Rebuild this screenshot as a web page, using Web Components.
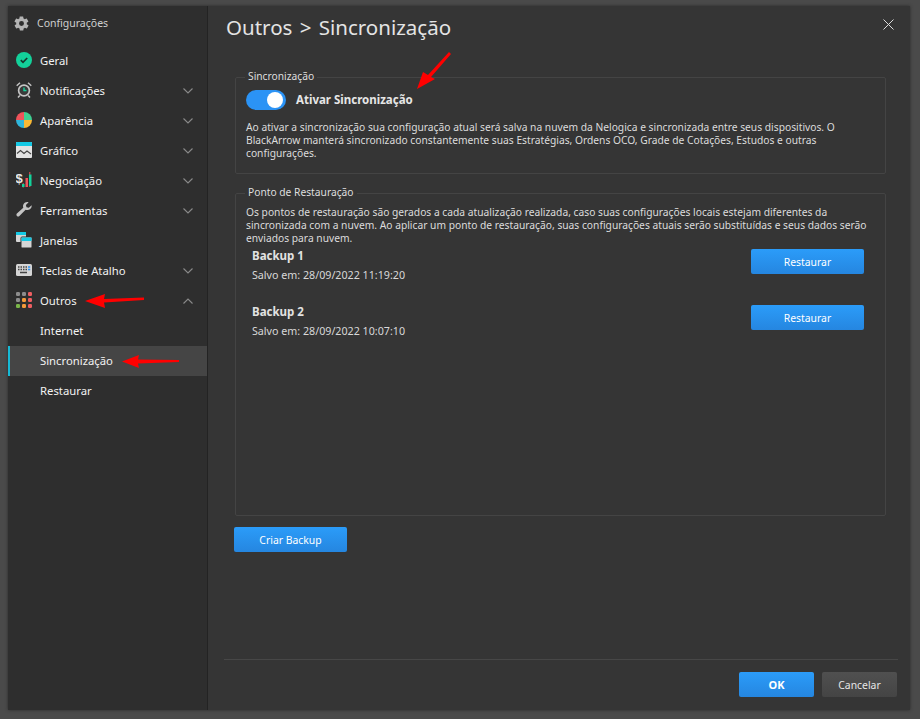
<!DOCTYPE html>
<html lang="pt"><head><meta charset="utf-8"><title>Configurações</title>
<style>
html,body{margin:0;height:100%;background:#4a4a4a;overflow:hidden}
body{font-family:"Noto Sans","Open Sans",sans-serif;font-size:12px;color:#e6e6e6}
</style></head><body>
<template id="t-dialog"><style>
:host{display:block;position:relative;box-sizing:border-box;width:902px;height:704px;margin:6px 0 0 8px;background:#353535;box-shadow:0 0 3px #2a2a2a}
.w{display:flex;height:100%}
</style><div class="w"><slot name="side"></slot><slot name="main"></slot></div><slot name="over"></slot></template>

<template id="t-side"><style>
:host{display:block;box-sizing:border-box;width:200px;height:100%;background:#2e2e2e;border-right:1px solid #232323}
.h{display:flex;align-items:center;gap:7px;height:34px;padding-left:5px;margin-bottom:6px;font-size:10.5px;color:#cfcfcf}
</style><div class="h"><svg width="17" height="17" viewBox="0 0 24 24"><path fill="#b4b4b4" d="M19.4 13c.1-.3.1-.7.1-1s0-.7-.1-1l2.100-1.600c.2-.2.2-.4.1-.6l-2-3.500c-.1-.2-.4-.3-.6-.2l-2.500 1c-.5-.4-1.100-.7-1.700-1l-.4-2.600c0-.2-.2-.4-.5-.4h-4c-.3 0-.5.2-.5.4l-.4 2.600c-.6.3-1.200.6-1.700 1l-2.500-1c-.2-.1-.5 0-.6.2l-2 3.500c-.1.2-.1.4.1.6L4.600 11c-.1.3-.1.7-.1 1s0 .7.100 1l-2.100 1.600c-.2.2-.2.4-.1.600l2 3.500c.1.2.4.3.6.2l2.500-1c.5.4 1.100.7 1.700 1l.4 2.600c0 .2.2.4.5.4h4c.3 0 .5-.2.5-.4l.4-2.600c.6-.3 1.200-.6 1.700-1l2.500 1c.2.1.5 0 .6-.2l2-3.500c.1-.2.1-.4-.1-.6zM12 15.500a3.500 3.500 0 1 1 0-7 3.500 3.500 0 0 1 0 7z"/></svg><span>Configurações</span></div><slot></slot></template>

<template id="t-item"><style>
:host{display:flex;align-items:center;box-sizing:border-box;height:30px;padding:0 0 2px 8px;color:#f2f2f2;font-size:11.3px;font-weight:400}
:host([sub]){padding-left:32px}
:host([active]){background:#454545;box-shadow:inset 2px 0 0 #16b9d6;}
.i{display:flex;width:16px;height:16px;margin-right:8px;flex:none}
:host([sub]) .i{display:none}
.t{flex:1}
.c{width:10px;height:6px;margin:2px 14px 0 0;flex:none}
</style><span class="i"><slot name="icon"></slot></span><span class="t"><slot></slot></span><svg class="c" viewBox="0 0 10 6"><path id="p" fill="none" stroke="#8a8a8a" stroke-width="1.100" d=""/></svg></template>

<template id="t-field"><style>
:host{display:block}
fieldset{margin:0;padding:0 10px;border:1px solid #444;border-radius:2px;height:100%;box-sizing:border-box;min-width:0}
legend{padding:0 3px 2px;margin-left:-1px;font-size:10.25px;color:#dedede;line-height:12px}
</style><fieldset><legend id="l"></legend><slot></slot></fieldset></template>

<template id="t-btn"><style>
:host{display:inline-flex;align-items:center;justify-content:center;height:25px;border-radius:2px;background:linear-gradient(#2b9cf9,#2586e0);color:#fff;font-size:10.4px}
:host([kind=ok]){font-weight:700;font-size:11px}
:host([kind=gray]){background:linear-gradient(#505050,#444);color:#e6e6e6}
</style><slot></slot></template>

<template id="t-switch"><style>
:host{display:block;width:40px;height:20px;border-radius:10px;background:#2b93f5;position:relative;flex:none}
b{position:absolute;right:3px;top:2px;width:16px;height:16px;border-radius:50%;background:#fff}
</style><b></b></template>

<template id="t-backup"><style>
:host{display:flex;justify-content:space-between;height:56px;padding:0 11px 0 6px}
h4{margin:0;font-size:11.500px;line-height:14px;font-weight:700;color:#e2e2e2}
p{margin:5px 0 0;font-size:10.700px;line-height:14px;color:#d8d8d8}
</style><div><h4><slot name="name"></slot></h4><p><slot name="date"></slot></p></div><div><slot name="action"></slot></div></template>

<template id="t-main"><style>
:host{display:flex;flex-direction:column;flex:1;min-width:0;padding:0 12px 0 16px;position:relative}
h1{margin:0;height:64px;padding:0 0 0 2px;font-size:20.500px;font-weight:400;line-height:43px;color:#e4e4e4;white-space:pre;word-spacing:2px}
.x{position:absolute;right:16px;top:13px;width:11px;height:11px}
.body{flex:1;padding:0 0 0 11px;margin-right:12px}
.foot{box-sizing:border-box;height:51px;border-top:1px solid #474747;display:flex;justify-content:flex-end;gap:8px;padding:12px 1px 0 0}
</style><h1>Outros &gt; Sincronização</h1><svg class="x" viewBox="0 0 11 11"><path d="M.5.5l10 10M10.500.5l-10 10" stroke="#dcdcdc" fill="none"/></svg><div class="body"><slot></slot></div><div class="foot"><slot name="foot"></slot></div></template>

<a-dialog>
<a-side slot="side">
<a-item><svg slot="icon" width="16" height="16" viewBox="0 0 16 16"><circle cx="8" cy="8" r="8" fill="#13d19a"/><path d="M4.800 8.200l2.200 2.100 4.200-4.300" fill="none" stroke="#17362c" stroke-width="1.700"/></svg>Geral</a-item>
<a-item chev="down"><svg slot="icon" width="16" height="16" viewBox="0 0 16 16"><circle cx="8" cy="8.500" r="5.400" fill="#3a3a3a" stroke="#c4c4c4" stroke-width="1.700"/><path d="M8 5.500v3h2.500" stroke="#13d19a" stroke-width="1.400" fill="none"/><path d="M.7 3.700L4 .8M15.300 3.700L12 .8M3.800 13.500l-1.800 2M12.200 13.500l1.800 2" stroke="#c4c4c4" stroke-width="1.500"/></svg>Notificações</a-item>
<a-item chev="down"><svg slot="icon" width="16" height="16" viewBox="0 0 16 16"><path d="M8 8V0A8 8 0 0 0 0 8z" fill="#f0535a"/><path d="M8 8V0a8 8 0 0 1 8 8z" fill="#3fcf91"/><path d="M8 8H0a8 8 0 0 0 8 8z" fill="#2fb6dc"/><path d="M8 8h8a8 8 0 0 1-8 8z" fill="#f9b935"/></svg>Aparência</a-item>
<a-item chev="down"><svg slot="icon" width="16" height="16" viewBox="0 0 16 16"><rect width="16" height="16" rx="1" fill="#e2e2e2"/><path d="M0 1a1 1 0 0 1 1-1h14a1 1 0 0 1 1 1v3H0z" fill="#14c8e4"/><path d="M1 11.500l3.500-3 3.500 3 3-2.500 4 3" fill="none" stroke="#444" stroke-width="1.100"/></svg>Gráfico</a-item>
<a-item chev="down"><svg slot="icon" width="16" height="16" viewBox="0 0 16 16"><text x="-.5" y="10.500" font-family="Liberation Sans" font-size="13" font-weight="700" fill="#e8e8e8">$</text><path d="M7.200 11v4.500M13.800 0v15" stroke-width="1" stroke="#f0535a"/><rect x="6" y="12" width="2.500" height="3" fill="#13d19a"/><rect x="9.500" y="6" width="2.500" height="9" fill="#f0535a"/><rect x="13" y="2.500" width="2.500" height="11.500" fill="#13d19a"/></svg>Negociação</a-item>
<a-item chev="down"><svg slot="icon" width="16" height="16" viewBox="0 0 16 16"><path d="M15.600 3.200l-2.800 2.500-2.300-.5-.6-2.300L12.600.2C10.200-.4 7.800.8 7.200 3c-.3 1-.2 1.900.1 2.700L.9 11.600c-1.500 1.500.9 4.100 2.500 2.500l6.200-6.300c3 .9 6.600-1.300 6-4.600z" fill="#c4c4c4"/></svg>Ferramentas</a-item>
<a-item><svg slot="icon" width="16" height="16" viewBox="0 0 16 16"><rect x="0" y="0" width="10" height="10" rx="1" fill="#d5d5d5"/><rect x="0" y="0" width="10" height="3" fill="#14c8e4"/><rect x="5" y="5" width="11" height="11" rx="1" fill="#d5d5d5" stroke="#2e2e2e"/><rect x="5.500" y="5.500" width="10" height="3.500" fill="#14c8e4"/></svg>Janelas</a-item>
<a-item chev="down"><svg slot="icon" width="16" height="16" viewBox="0 0 16 16"><rect y="2" width="16" height="12" rx="1.500" fill="#d5d5d5"/><path d="M2 5h1.500M4.500 5H6M7 5h1.500M9.500 5H11M2 7.500h1.500M4.500 7.500H6M7 7.500h1.500M9.500 7.500H11M4 10.500h7" stroke="#444" stroke-width="1.300"/><path d="M12 5h2.200M12 7.500h2.200" stroke="#2b93f5" stroke-width="1.300"/></svg>Teclas de Atalho</a-item>
<a-item chev="up"><svg slot="icon" width="16" height="16" viewBox="0 0 16 16"><g fill="#8d8d8d"><rect width="4" height="4" rx="1.200"/><rect x="6" width="4" height="4" rx="1.200"/><rect y="6" width="4" height="4" rx="1.200"/></g><g fill="#ef5f62"><rect x="12" width="4" height="4" rx="1.200"/><rect x="12" y="6" width="4" height="4" rx="1.200"/><rect x="12" y="12" width="4" height="4" rx="1.200"/></g><rect x="6" y="6" width="4" height="4" rx="1.200" fill="#f39a3a"/><rect y="12" width="4" height="4" rx="1.200" fill="#7ab648"/><rect x="6" y="12" width="4" height="4" rx="1.200" fill="#f39a3a"/></svg>Outros</a-item>
<a-item sub>Internet</a-item>
<a-item sub active>Sincronização</a-item>
<a-item sub>Restaurar</a-item>
</a-side>
<a-main slot="main">
<a-field legend="Sincronização" style="height:104px">
<div style="display:flex;align-items:center;gap:10px;height:21px;margin-top:5px;font-weight:700;font-size:11.500px;color:#e6e6e6"><a-switch></a-switch>Ativar Sincronização</div>
<p style="margin:11px 0 0;font-size:10.250px;line-height:13px;color:#dcdcdc">Ao ativar a sincronização sua configuração atual será salva na nuvem da Nelogica e sincronizada entre seus dispositivos. O BlackArrow manterá sincronizado constantemente suas Estratégias, Ordens OCO, Grade de Cotações, Estudos e outras configurações.</p>
</a-field>
<a-field legend="Ponto de Restauração" style="height:330px;margin-top:12px">
<p style="margin:6px 0 0;font-size:10.250px;line-height:13px;color:#dcdcdc">Os pontos de restauração são gerados a cada atualização realizada, caso suas configurações locais estejam diferentes da sincronizada com a nuvem. Ao aplicar um ponto de restauração, suas configurações atuais serão substituídas e seus dados serão enviados para nuvem.</p>
<div style="margin-top:4px">
<a-backup><span slot="name">Backup 1</span><span slot="date">Salvo em: 28/09/2022 11:19:20</span><a-btn slot="action" style="width:113px">Restaurar</a-btn></a-backup>
<a-backup><span slot="name">Backup 2</span><span slot="date">Salvo em: 28/09/2022 10:07:10</span><a-btn slot="action" style="width:113px">Restaurar</a-btn></a-backup>
</div>
</a-field>
<a-btn style="width:113px;margin:11px 0 0 -1px">Criar Backup</a-btn>
<a-btn slot="foot" kind="ok" style="width:75px">OK</a-btn>
<a-btn slot="foot" kind="gray" style="width:75px">Cancelar</a-btn>
</a-main>
<a-arrow slot="over" x="77" y="288" w="60" h="14" pts="0,7 20,0 19,5 59,3.500 59,6 19,8.500 20,14"></a-arrow>
<a-arrow slot="over" x="114" y="349" w="58" h="13" pts="0,6.500 17,0 16,4.500 57,5 57,7 16,8.500 17,13"></a-arrow>
<a-arrow slot="over" x="409" y="46" w="34" h="38" pts="0,37 6,20 11,23 32,0 34,2 14,25 18,27"></a-arrow>
</a-dialog>

<script>
class Base extends HTMLElement{constructor(){super();const id=this.constructor.tpl;this.attachShadow({mode:'open'}).appendChild(document.getElementById(id).content.cloneNode(true));}}
customElements.define('a-dialog',class extends Base{static tpl='t-dialog'});
customElements.define('a-side',class extends Base{static tpl='t-side'});
customElements.define('a-main',class extends Base{static tpl='t-main'});
customElements.define('a-btn',class extends Base{static tpl='t-btn'});
customElements.define('a-switch',class extends Base{static tpl='t-switch'});
customElements.define('a-backup',class extends Base{static tpl='t-backup'});
customElements.define('a-field',class extends Base{static tpl='t-field';connectedCallback(){this.shadowRoot.getElementById('l').textContent=this.getAttribute('legend')}});
customElements.define('a-item',class extends Base{static tpl='t-item';connectedCallback(){const c=this.getAttribute('chev');const s=this.shadowRoot.querySelector('.c');if(!c){s.style.visibility='hidden';return}s.querySelector('path').setAttribute('d',c==='up'?'M.5 5.500L5 1l4.500 4.500':'M.5.5L5 5 9.500.5')}});
customElements.define('a-arrow',class extends HTMLElement{constructor(){super();this.attachShadow({mode:'open'})}connectedCallback(){const a=n=>this.getAttribute(n);this.shadowRoot.innerHTML=`<style>:host{position:absolute;left:${a('x')}px;top:${a('y')}px;display:block;width:${a('w')}px;height:${a('h')}px}svg{display:block;overflow:visible}</style><svg width="${a('w')}" height="${a('h')}"><polygon points="${a('pts')}" fill="#f00"/></svg>`}});
</script>
</body></html>
